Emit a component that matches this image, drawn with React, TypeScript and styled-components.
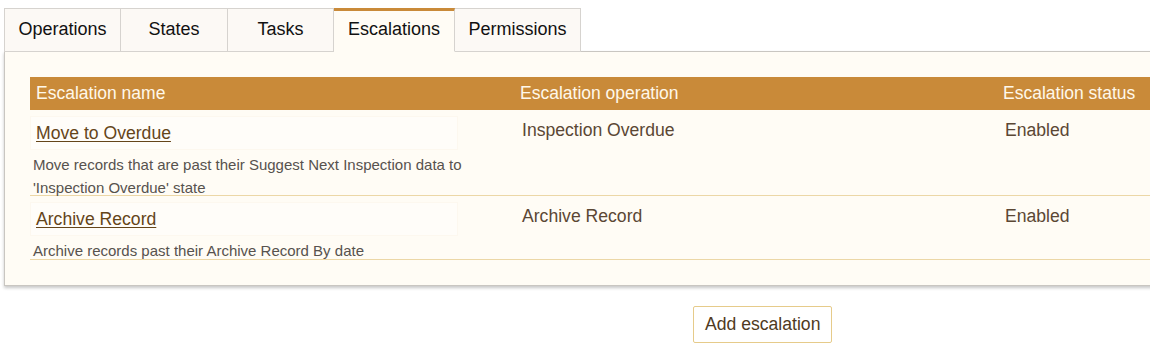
import React from "react";
import styled, { createGlobalStyle, css } from "styled-components";

const Global = createGlobalStyle`
  html, body { margin: 0; padding: 0; background: #ffffff; overflow: hidden; }
  body { font-family: "Liberation Sans", Arial, sans-serif; }
`;

const Page = styled.div`
  padding: 8px 0 0 4px;
  width: 1160px;
`;

const TabList = styled.div`
  display: flex;
  height: 43px;
  position: relative;
  z-index: 1;
`;

const Tab = styled.div<{ $active?: boolean; $w: number }>`
  box-sizing: border-box;
  width: ${(p) => p.$w}px;
  height: 44px;
  display: flex;
  align-items: flex-start;
  justify-content: center;
  padding-top: 10px;
  font-size: 18px;
  line-height: 20px;
  color: #111;
  background: #fcf9f5;
  border: 1px solid #d6d3cf;
  border-left-width: 0;
  &:first-child { border-left-width: 1px; }
  ${(p) =>
    p.$active &&
    css`
      background: #fffcf5;
      border-top: 3px solid #c98a39;
      border-bottom-color: #fffcf5;
      padding-top: 8px;
    `}
`;

const Panel = styled.div`
  box-sizing: border-box;
  background: #fffcf5;
  border: 1px solid #c9c6c1;
  box-shadow: 0 2px 3px rgba(0, 0, 0, 0.22);
  padding: 25px 0 25px 25px;
`;

const Grid = styled.div`
  display: grid;
  grid-template-columns: 484px 483px 1fr;
`;

const HeadCell = styled.div`
  background: #c98a39;
  color: #fff8ea;
  font-size: 17.5px;
  height: 33px;
  line-height: 33px;
  padding-left: 6px;
`;

const Cell = styled.div<{ $pad?: number }>`
  border-bottom: 1px solid #ecd7a6;
  padding: 9px 0 0 ${(p) => p.$pad ?? 8}px;
  font-size: 17.6px;
  line-height: 23px;
  color: #5b4734;
`;

const NameCell = styled.div`
  box-sizing: border-box;
  min-height: 64px;
  border-bottom: 1px solid #ecd7a6;
  padding-top: 6px;
`;

const LinkBox = styled.div`
  height: 34px;
  margin-right: 56px;
  display: flex;
  align-items: center;
  padding-left: 5px;
  background: #fffdf9;
  border: 1px solid #fdf8ef;
  box-sizing: border-box;
`;

const TitleLink = styled.a`
  font-size: 17.6px;
  color: #654519;
  text-decoration: underline;
  text-underline-offset: 2px;
  cursor: pointer;
`;

const Desc = styled.div`
  font-size: 15px;
  line-height: 23px;
  color: #57524e;
  padding: 3px 0 0 3px;
  margin-bottom: -4px;
  max-width: 460px;
`;

const ButtonRow = styled.div`
  display: flex;
  padding: 20px 0 0 689px;
`;

const Button = styled.button`
  font-family: "Liberation Sans", Arial, sans-serif;
  font-size: 17.6px;
  color: #4f3a22;
  background: #ffffff;
  border: 1px solid #e6cb8a;
  border-radius: 2px;
  height: 37px;
  padding: 0 11px;
  cursor: pointer;
`;

const tabs = [
  { label: "Operations", w: 117 },
  { label: "States", w: 107 },
  { label: "Tasks", w: 106 },
  { label: "Escalations", w: 121, active: true },
  { label: "Permissions", w: 126 },
];

const rows = [
  {
    name: "Move to Overdue",
    desc: "Move records that are past their Suggest Next Inspection data to 'Inspection Overdue' state",
    op: "Inspection Overdue",
    status: "Enabled",
  },
  {
    name: "Archive Record",
    desc: "Archive records past their Archive Record By date",
    op: "Archive Record",
    status: "Enabled",
  },
];

export default function App() {
  return (
    <>
      <Global />
      <Page>
        <TabList>
          {tabs.map((t) => (
            <Tab key={t.label} $w={t.w} $active={t.active}>
              {t.label}
            </Tab>
          ))}
        </TabList>
        <Panel>
          <Grid>
            <HeadCell>Escalation name</HeadCell>
            <HeadCell>Escalation operation</HeadCell>
            <HeadCell>Escalation status</HeadCell>
            {rows.map((r) => (
              <React.Fragment key={r.name}>
                <NameCell>
                  <LinkBox>
                    <TitleLink>{r.name}</TitleLink>
                  </LinkBox>
                  <Desc>{r.desc}</Desc>
                </NameCell>
                <Cell>{r.op}</Cell>
                <Cell>{r.status}</Cell>
              </React.Fragment>
            ))}
          </Grid>
        </Panel>
        <ButtonRow>
          <Button>Add escalation</Button>
        </ButtonRow>
      </Page>
    </>
  );
}
